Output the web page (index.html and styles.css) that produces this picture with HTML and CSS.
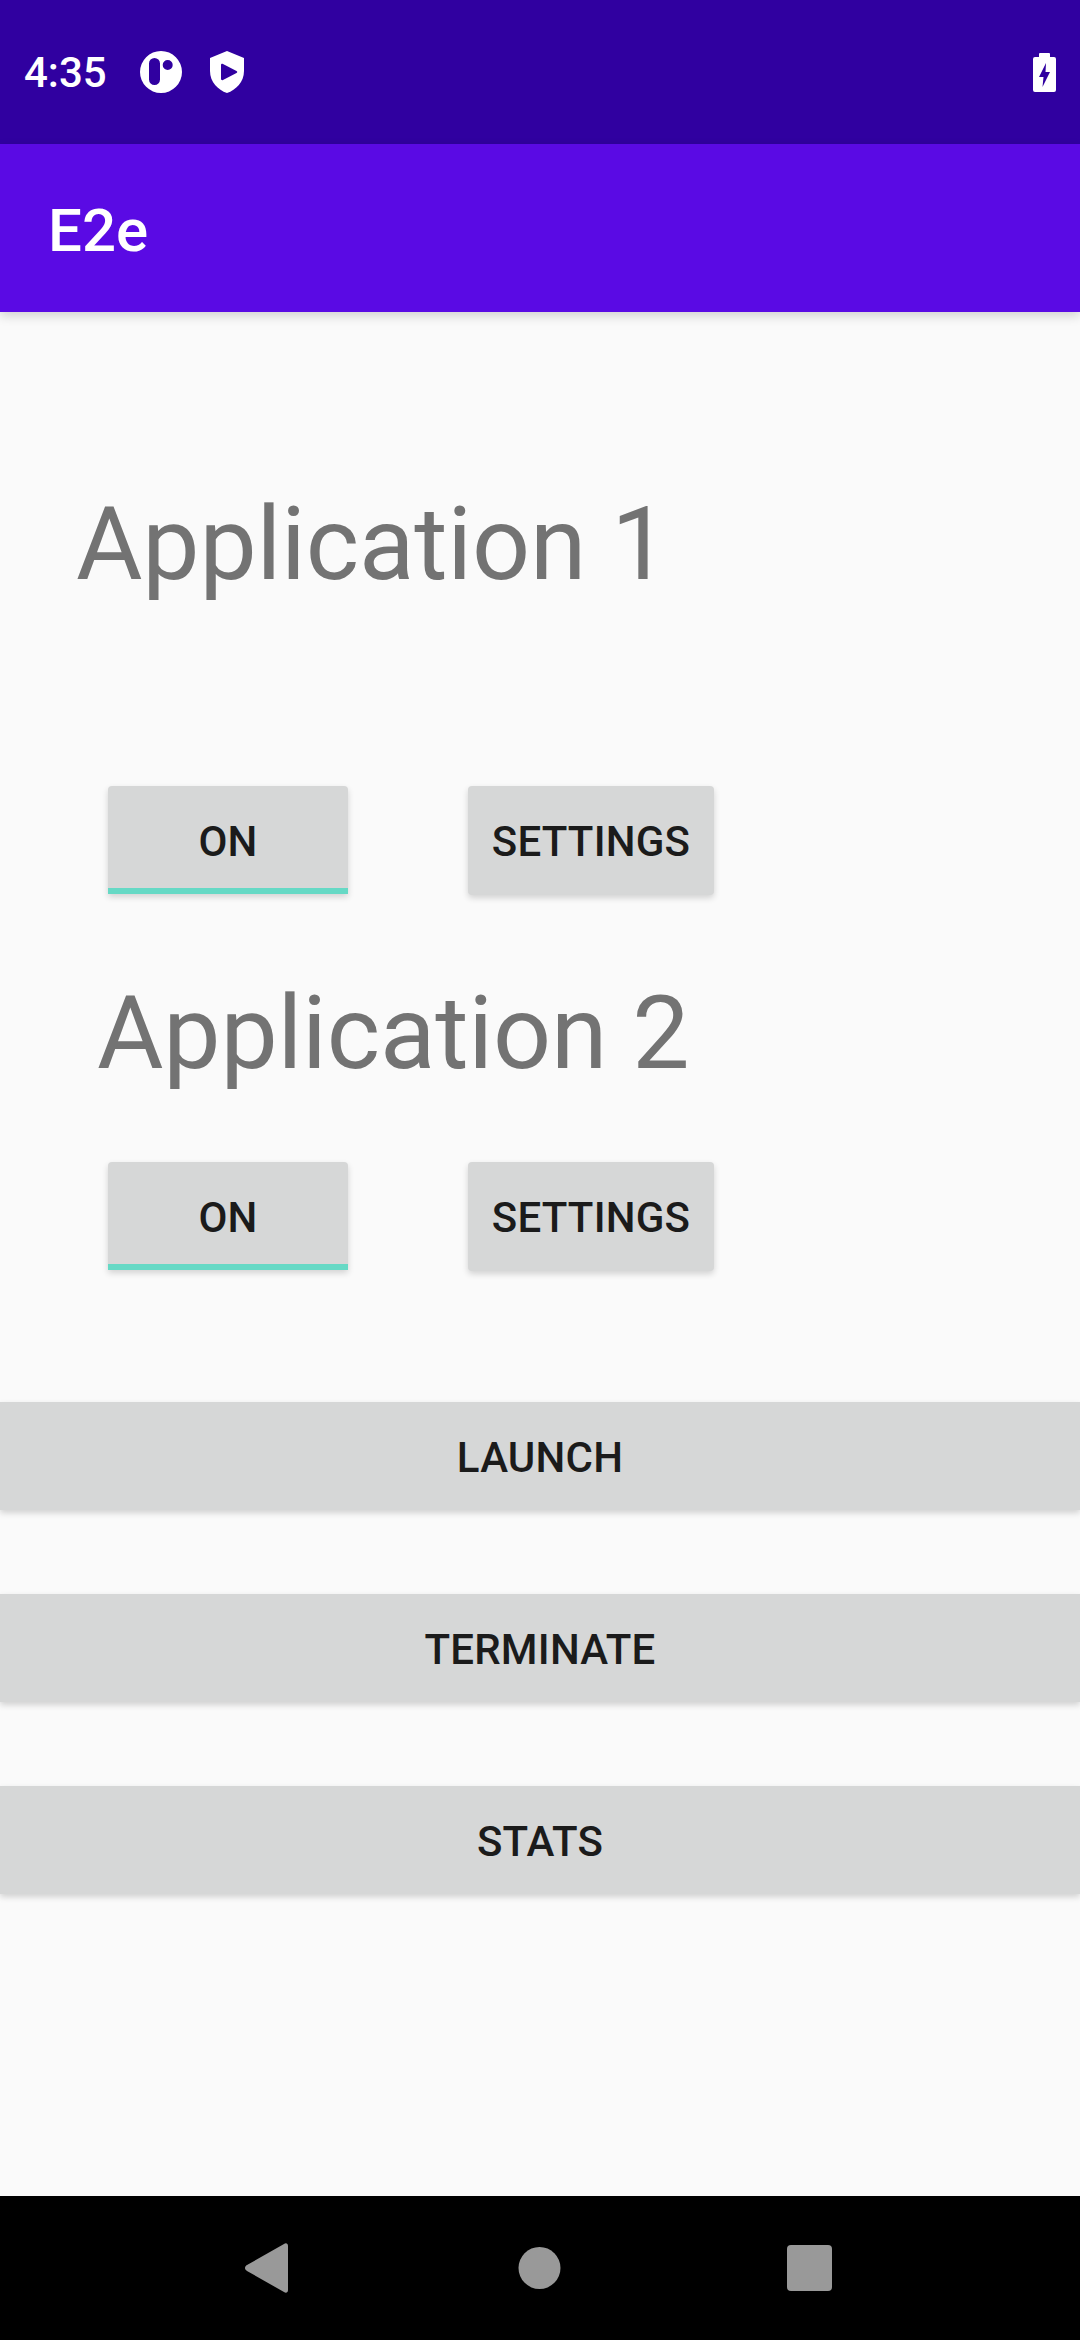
FILE: index.html
```html
<!DOCTYPE html>
<html lang="en">
<head>
    <meta charset="UTF-8">
    <meta name="viewport" content="width=device-width, initial-scale=1.0">
    <title>E2e</title>
    <link rel="stylesheet" href="styles.css">
</head>
<body>
    <div class="status-bar">
        <span class="clock">4:35</span>
        <svg class="status-icon" viewBox="0 0 42 42">
            <path fill-rule="evenodd" fill="#fff" d="M21 0a21 21 0 1 0 0 42a21 21 0 1 0 0-42zM14.500 7a5.500 5.500 0 0 1 5.500 5.500v16a5.500 5.500 0 0 1-11 0v-16a5.500 5.500 0 0 1 5.500-5.500zM27.700 9a5 5 0 1 1 0 10a5 5 0 1 1 0-10z"/>
        </svg>
        <svg class="status-icon shield" viewBox="0 0 34 42">
            <path fill-rule="evenodd" fill="#fff" d="M17 0L34 7V20C34 31 26 39 17 42C8 39 0 31 0 20V7zM11 14V28C11 29 12 29.500 13 29L26.500 22C27.500 21.500 27.500 20.500 26.500 20L13 13C12 12.500 11 13 11 14z"/>
        </svg>
        <svg class="battery" viewBox="0 0 23 39">
            <path fill-rule="evenodd" fill="#fff" d="M7 0h9a1 1 0 0 1 1 1v3h4a2 2 0 0 1 2 2v31a2 2 0 0 1-2 2h-19a2 2 0 0 1-2-2v-31a2 2 0 0 1 2-2h4v-3a1 1 0 0 1 1-1zM13 10L6 24h4.500l-1 10L17 19h-4.500z"/>
        </svg>
    </div>

    <header class="app-bar">E2e</header>

    <main class="content">
        <section class="app-section first">
            <h2 class="app-title">Application 1</h2>
            <div class="button-row">
                <button class="btn toggle">ON</button>
                <button class="btn settings">SETTINGS</button>
            </div>
        </section>

        <section class="app-section second">
            <h2 class="app-title">Application 2</h2>
            <div class="button-row">
                <button class="btn toggle">ON</button>
                <button class="btn settings">SETTINGS</button>
            </div>
        </section>

        <div class="actions">
            <button class="btn wide">LAUNCH</button>
            <button class="btn wide">TERMINATE</button>
            <button class="btn wide">STATS</button>
        </div>
    </main>

    <nav class="nav-bar">
        <svg class="nav-icon" viewBox="0 0 43 50">
            <path fill="#999" d="M39 1C41 -0.500 43 0.500 43 3V47C43 49.500 41 50.500 39 49L2 28C-0.700 26.500 -0.700 23.500 2 22z"/>
        </svg>
        <svg class="nav-icon" viewBox="0 0 43 50">
            <circle cx="21.500" cy="25" r="21" fill="#999"/>
        </svg>
        <svg class="nav-icon" viewBox="0 0 45 46">
            <rect width="45" height="46" rx="4" fill="#999"/>
        </svg>
    </nav>
</body>
</html>
```

FILE: styles.css
```css
* {
    box-sizing: border-box;
}
body {
    font-family: Roboto, sans-serif;
    margin: 0;
    width: 1080px;
    height: 2340px;
    display: flex;
    flex-direction: column;
    background-color: #fafafa;
    overflow: hidden;
}
.status-bar {
    height: 144px;
    flex: none;
    display: flex;
    align-items: center;
    padding: 0 24px;
    background-color: #3000a0;
    color: white;
}
.clock {
    font-size: 42px;
    font-weight: 500;
    width: 116px;
}
.status-icon {
    width: 42px;
    height: 42px;
}
.shield {
    width: 34px;
    margin-left: 28px;
}
.battery {
    width: 23px;
    height: 39px;
    margin-left: auto;
}
.app-bar {
    height: 168px;
    flex: none;
    display: flex;
    align-items: center;
    padding: 4px 0 0 48px;
    font-size: 60px;
    font-weight: 500;
    color: white;
    background-color: #5a0ae4;
    box-shadow: 0 4px 10px rgba(0, 0, 0, 0.16);
    position: relative;
}
.content {
    flex: 1;
    display: flex;
    flex-direction: column;
}
.app-section.first {
    padding-top: 167px;
}
.app-title {
    margin: 0;
    font-size: 102px;
    font-weight: 400;
    letter-spacing: -0.2px;
    line-height: 130px;
    color: #737373;
}
.first .app-title {
    padding-left: 76px;
    margin-bottom: 177px;
}
.second .app-title {
    padding-left: 97px;
    margin-top: 73px;
    margin-bottom: 64px;
}
.button-row {
    display: flex;
    padding-left: 108px;
    gap: 120px;
}
.btn {
    font-family: Roboto, sans-serif;
    font-size: 42px;
    font-weight: 500;
    letter-spacing: 0.2px;
    color: #1b1b1b;
    background-color: #d6d7d7;
    border: none;
    padding: 2px 0 0;
    height: 109px;
    border-radius: 4px;
    box-shadow: 0 3px 6px rgba(0, 0, 0, 0.16);
}
.toggle {
    width: 240px;
    height: 108px;
    border-radius: 4px 4px 0 0;
    box-shadow: inset 0 -6px 0 #66d9c5, 0 3px 6px rgba(0, 0, 0, 0.16);
}
.settings {
    width: 246px;
}
.actions {
    display: flex;
    flex-direction: column;
    gap: 84px;
    margin-top: 131px;
}
.wide {
    width: 100%;
    height: 108px;
    border-radius: 0;
}
.nav-bar {
    height: 144px;
    flex: none;
    background-color: black;
    display: grid;
    grid-template-columns: 273px 269px 45px;
    align-items: center;
    padding-left: 245px;
}
.nav-icon {
    width: 43px;
    display: block;
}
.nav-icon:last-child {
    width: 45px;
}
```
